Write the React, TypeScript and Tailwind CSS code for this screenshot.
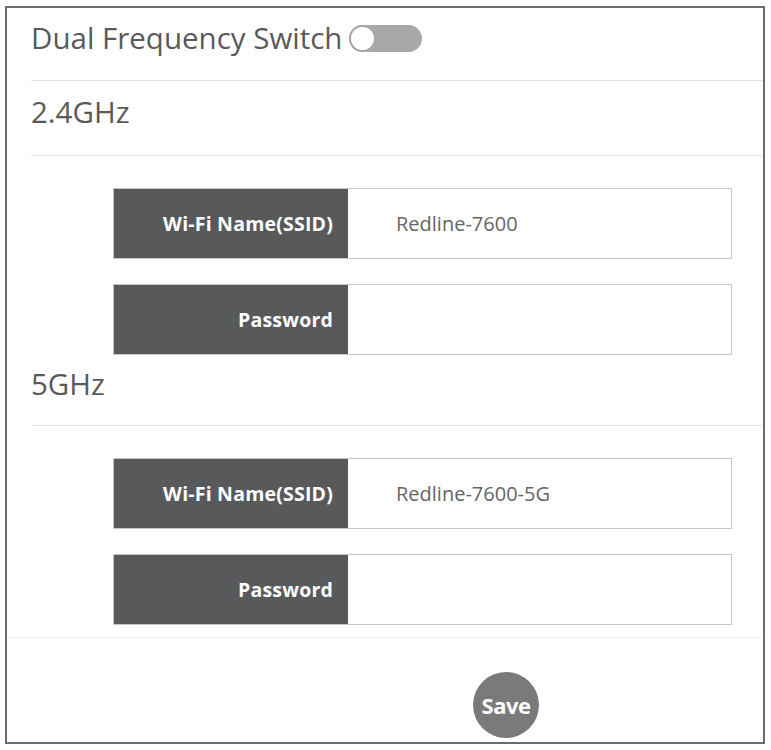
import React from "react";

const Row = ({ label, value }: { label: string; value?: string }) => {
  return (
    <div className="flex h-[71px] w-[619px] border border-[#c4c4c4]">
      <div className="flex w-[234px] shrink-0 items-center justify-end bg-[#58595b] pr-[15px] text-[19.5px] font-bold tracking-[0.2px] text-white">
        {label}
      </div>
      <div className="flex flex-1 items-center bg-white pl-[48px] text-[20px] text-[#666]">
        {value}
      </div>
    </div>
  );
};

const App = () => {
  return (
    <div className="min-h-[750px] bg-white pl-[5px] pt-[6px] font-['Open_Sans',sans-serif]">
      <div className="flex h-[738px] w-[760px] flex-col border-2 border-[#6b6b6b]">
        {/* Switch */}
        <div className="flex h-[72px] items-start pl-[24px] pt-[11px]">
          <div className="flex items-center leading-[38px]">
            <span className="text-[29.5px] text-[#5a5a5a]">Dual Frequency Switch</span>
            <button className="ml-[7px] flex h-[27px] w-[73px] items-center rounded-full bg-[#a8a8a8]">
              <span className="h-[27px] w-[27px] rounded-full border-2 border-[#a8a8a8] bg-white" />
            </button>
          </div>
        </div>
        <div className="ml-[24px] h-px bg-[#e2e2e2]" />

        {/* 2.4GHz */}
        <div className="h-[74px] pl-[24px] pt-[12px] text-[29.5px] leading-[38px] text-[#5a5a5a]">
          2.4GHz
        </div>
        <div className="ml-[24px] h-px bg-[#e2e2e2]" />

        <div className="flex flex-col gap-[25px] pl-[106px] pt-[32px]">
          <Row label="Wi-Fi Name(SSID)" value="Redline-7600" />
          <Row label="Password" />
        </div>

        {/* 5GHz */}
        <div className="h-[70px] pl-[24px] pt-[10px] text-[29.5px] leading-[38px] text-[#5a5a5a]">
          5GHz
        </div>
        <div className="ml-[24px] h-px bg-[#e2e2e2]" />

        <div className="flex flex-col gap-[25px] pl-[106px] pt-[32px]">
          <Row label="Wi-Fi Name(SSID)" value="Redline-7600-5G" />
          <Row label="Password" />
        </div>

        <div className="mt-[12px] h-px bg-[#f1f1f1]" />

        <div className="pl-[466px] pt-[34px]">
          <button className="flex h-[66px] w-[66px] items-center justify-center rounded-full bg-[#7a7a7a] text-[22px] font-bold tracking-[-0.5px] text-white">
            Save
          </button>
        </div>
      </div>
    </div>
  );
};

export default App;
